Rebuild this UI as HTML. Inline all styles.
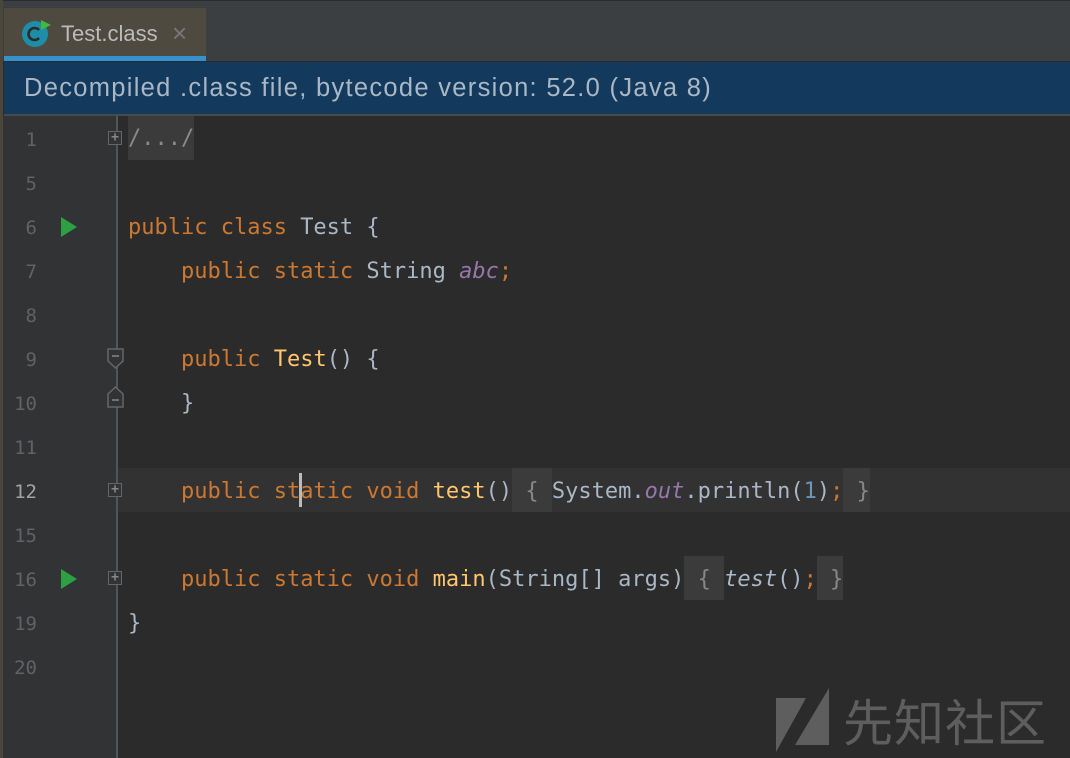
<!DOCTYPE html>
<html><head><meta charset="utf-8"><style>
body{margin:0;width:1070px;height:758px;overflow:hidden;background:#2b2b2b;position:relative;font-family:"Liberation Sans",sans-serif}
.top{position:absolute;left:0;top:0;width:1070px;height:61px;background:#3c3f41;border-top:1px solid #2b2b2b;box-sizing:border-box}
.tab{position:absolute;left:4px;top:8px;width:202px;height:48px;background:#4e4a40}
.tabline{position:absolute;left:4px;top:56px;width:202px;height:5px;background:#3592d0}
.tab .t{position:absolute;left:57px;top:13px;font-size:22px;color:#bbbbbb}
.tab .x{position:absolute;left:168px;top:10px;font-size:26px;color:#777}
.banner{position:absolute;left:4px;top:62px;width:1066px;height:52px;background:#133a5c;border-bottom:2px solid #4a4a4a;box-sizing:content-box}
.banner span{position:absolute;left:20px;top:12px;font-size:25.5px;letter-spacing:1.3px;color:#a9b7c6}
.gut{position:absolute;left:0;top:116px;width:117px;height:642px;background:#313335}
.edge{position:absolute;left:0;top:0;width:3px;height:758px;background:#4a463c}
.fold{position:absolute;left:116px;top:116px;width:2px;height:642px;background:#555}
.ln{position:absolute;left:0;width:37px;text-align:right;font:19px "DejaVu Sans Mono",monospace;color:#606366;line-height:44px}
.code{position:absolute;left:128px;font:22px "DejaVu Sans Mono",monospace;color:#a9b7c6;line-height:44px;white-space:pre}
.k{color:#cc7832}.f{color:#ffc66d}.p{color:#9876aa;font-style:italic}.n{color:#6897bb}.i{font-style:italic}
.box{background:#3b3b3b;display:inline-block;line-height:44px;vertical-align:top}
.run{position:absolute;left:61px;width:0;height:0;border-top:10px solid transparent;border-bottom:10px solid transparent;border-left:16px solid #2ea043}
.fb{position:absolute;left:108px;width:14px;height:14px;border:1.5px solid #666;background:#313335;box-sizing:border-box;color:#888;font:bold 13px/11px monospace;text-align:center}
</style></head><body>
<div class="top"></div>
<div class="tab">
<svg style="position:absolute;left:17px;top:10px" width="32" height="30"><circle cx="14" cy="16" r="13" fill="#1e8ea8"/><path d="M18 12a6 6 0 1 0 0 8" stroke="#2b2b2b" stroke-width="2.6" fill="none"/><path d="M20 2l10 5-10 5z" fill="#3dbb3d"/></svg>
<span class="t">Test.class</span><span class="x">×</span></div>
<div class="tabline"></div>
<div class="banner"><span>Decompiled .class file, bytecode version: 52.0 (Java 8)</span></div>
<div class="gut"></div>
<div class="edge"></div>
<div style="position:absolute;left:117px;top:468px;width:953px;height:44px;background:#323232"></div>
<div class="fold"></div>
<div class="ln" style="top:118px">1</div>
<div class="ln" style="top:162px">5</div>
<div class="ln" style="top:206px">6</div>
<div class="ln" style="top:250px">7</div>
<div class="ln" style="top:294px">8</div>
<div class="ln" style="top:338px">9</div>
<div class="ln" style="top:382px">10</div>
<div class="ln" style="top:426px">11</div>
<div class="ln" style="top:470px;color:#a4a3a3">12</div>
<div class="ln" style="top:514px">15</div>
<div class="ln" style="top:558px">16</div>
<div class="ln" style="top:602px">19</div>
<div class="ln" style="top:646px">20</div>
<div class="run" style="top:217px"></div>
<div class="run" style="top:569px"></div>
<div class="fb" style="top:131px">+</div>
<svg style="position:absolute;left:107px;top:348px" width="18" height="64"><path d="M1 1h15v12l-7.5 7-7.5-7z" fill="#313335" stroke="#666" stroke-width="1.5"/><path d="M5 8h7" stroke="#888" stroke-width="1.5"/><path d="M1 59h15v-13l-7.5-7-7.5 7z" fill="#313335" stroke="#666" stroke-width="1.5"/><path d="M5 52h7" stroke="#888" stroke-width="1.5"/></svg>
<div class="fb" style="top:483px">+</div>
<div class="fb" style="top:571px">+</div>
<div class="code" style="top:116px"><span class="box" style="color:#8a8a8a;padding-top:2px;line-height:42px">/.../</span></div>
<div class="code" style="top:206px"><span class="k">public class </span>Test {</div>
<div class="code" style="top:250px">    <span class="k">public static </span>String <span class="p">abc</span><span class="k">;</span></div>
<div class="code" style="top:338px">    <span class="k">public </span><span class="f">Test</span>() {</div>
<div class="code" style="top:382px">    }</div>
<div class="code" style="top:468px">    <span style="position:relative;top:2px"><span class="k">public static void </span><span class="f">test</span>()</span><span class="box" style="color:#888"><span style="position:relative;top:2px"> { </span></span><span style="position:relative;top:2px">System.<span class="p">out</span>.println(<span class="n">1</span>)<span class="k">;</span></span><span class="box" style="color:#888"><span style="position:relative;top:2px"> }</span></span></div>
<div style="position:absolute;left:299px;top:473px;width:3px;height:34px;background:#bbb"></div>
<div class="code" style="top:556px">    <span style="position:relative;top:2px"><span class="k">public static void </span><span class="f">main</span>(String[] args)</span><span class="box" style="color:#888"><span style="position:relative;top:2px"> { </span></span><span style="position:relative;top:2px"><span class="i">test</span>()<span class="k">;</span></span><span class="box" style="color:#888"><span style="position:relative;top:2px"> }</span></span></div>
<div class="code" style="top:602px">}</div>
<svg style="position:absolute;left:770px;top:680px" width="70" height="78"><path d="M6 18h30L6 72z M59 8v57H25z" fill="#5e5e5e"/></svg>
<div style="position:absolute;left:843px;top:684px;font:50px 'Noto Sans CJK SC',sans-serif;color:#5e5e5e;letter-spacing:1px">先知社区</div>
</body></html>
